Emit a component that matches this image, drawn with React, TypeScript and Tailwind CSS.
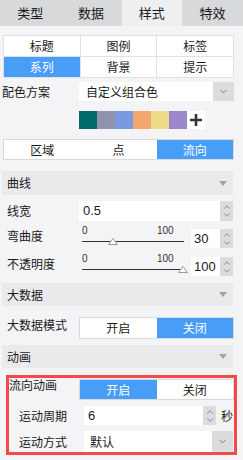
import { ChevronDown, ChevronUp } from 'lucide-react'

const BLUE = 'bg-[#489df7]'

function Tabs() {
	const tabs = ['类型', '数据', '样式', '特效']
	return (
		<div className="flex h-[26px] bg-[#d8d9db]">
			{tabs.map((t) => (
				<div
					key={t}
					className={`flex-1 flex items-center justify-center text-[13px] ${t === '样式' ? 'bg-[#efeff1]' : ''}`}
				>
					{t}
				</div>
			))}
		</div>
	)
}

function SubTabs() {
	const items = ['标题', '图例', '标签', '系列', '背景', '提示']
	return (
		<div className="mt-[9px] ml-[3px] w-[231px] grid grid-cols-3 gap-px bg-[#e1e1e3] border border-[#e1e1e3]">
			{items.map((t) => (
				<div
					key={t}
					className={`h-[20px] flex items-center justify-center text-[12px] ${t === '系列' ? `${BLUE} text-white` : 'bg-white'}`}
				>
					{t}
				</div>
			))}
		</div>
	)
}

function Segmented({ items, active, className }: { items: string[]; active: number; className?: string }) {
	return (
		<div className={`flex border border-[#d9d9db] bg-white ${className}`}>
			{items.map((t, i) => (
				<div
					key={t}
					className={`flex-1 flex items-center justify-center text-[12px] ${i === active ? `${BLUE} text-white` : ''}`}
				>
					{t}
				</div>
			))}
		</div>
	)
}

function DropBtn() {
	return (
		<div className="w-[21px] h-full bg-[#dcdcde] flex items-center justify-center">
			<ChevronDown size={11} strokeWidth={1.5} className="text-[#555]" />
		</div>
	)
}

function Spinner() {
	return (
		<div className="w-[13px] h-full bg-[#dcdcde] flex flex-col items-center justify-center">
			<ChevronUp size={10} strokeWidth={1.5} className="text-[#555] -mb-[1px]" />
			<ChevronDown size={10} strokeWidth={1.5} className="text-[#555] -mt-[1px]" />
		</div>
	)
}

function Header({ title, className }: { title: string; className?: string }) {
	return (
		<div className={`ml-[2px] w-[231px] bg-[#eaeaec] flex items-center justify-between pl-[5px] pr-[6px] text-[12px] ${className}`}>
			<span>{title}</span>
			<svg width="8" height="5" viewBox="0 0 8 5">
				<path d="M0 0 H8 L4 5 Z" fill="#a3a3a5" />
			</svg>
		</div>
	)
}

function Slider({ pos, value }: { pos: number; value: string }) {
	return (
		<div className="flex items-end h-[24px]">
			<div className="relative w-[102px] h-[24px] ml-[3px] font-['Liberation_Sans',sans-serif] text-[10px] leading-[10px] text-[#333]">
				<span className="absolute left-[0px] top-[1px]">0</span>
				<span className="absolute left-[75px] top-[1px]">100</span>
				<div className="absolute left-0 right-0 top-[16px] h-px bg-[#333]" />
				<svg width="10" height="7" viewBox="0 0 10 7" className="absolute top-[13px]" style={{ left: pos - 5 }}>
					<path d="M5 0.5 L9.5 6.5 H0.5 Z" fill="#fff" stroke="#9a9a9a" strokeWidth="1" />
				</svg>
			</div>
			<div className="ml-[7px] flex h-[19px] mb-[1px]">
				<div className="w-[29px] bg-white flex items-center pl-[3px] text-[13px] font-['Liberation_Sans',sans-serif]">
					{value}
				</div>
				<Spinner />
			</div>
		</div>
	)
}

export default function App() {
	const swatches = ['#006a68', '#9192ac', '#7a9ae0', '#f0a86c', '#eedd88', '#9b87cc']
	return (
		<div className="w-[243px] h-[460px] overflow-hidden bg-[#f4f4f6] text-[#1a1a1a] font-['Noto_Sans_CJK_SC',sans-serif]">
			<Tabs />
			<SubTabs />

			<div className="mt-[4px] flex items-center h-[19px] text-[12px]">
				<span className="w-[79px] pl-[2px]">配色方案</span>
				<div className="w-[155px] h-full flex bg-white">
					<div className="flex-1 flex items-center pl-[7px]">自定义组合色</div>
					<DropBtn />
				</div>
			</div>

			<div className="mt-[10px] ml-[79px] flex h-[18px]">
				{swatches.map((c) => (
					<div key={c} className="w-[18px] h-full" style={{ background: c }} />
				))}
				<div className="w-[18px] h-full bg-white flex items-center justify-center">
					<svg width="12" height="12" viewBox="0 0 12 12">
						<path d="M6 0 V12 M0 6 H12" stroke="#333" strokeWidth="2.6" />
					</svg>
				</div>
			</div>

			<Segmented items={['区域', '点', '流向']} active={2} className="mt-[10px] ml-[3px] w-[231px] h-[21px]" />

			<Header title="曲线" className="mt-[11px] h-[24px]" />

			<div className="mt-[6px] flex items-center h-[20px] text-[12px]">
				<span className="w-[79px] pl-[7px]">线宽</span>
				<div className="w-[141px] h-full bg-white flex items-center pl-[4px] text-[13px] font-['Liberation_Sans',sans-serif]">
					0.5
				</div>
				<Spinner />
			</div>

			<div className="mt-[4px] flex items-center text-[12px]">
				<span className="w-[79px] pl-[7px] -mt-[3px]">弯曲度</span>
				<Slider pos={31} value="30" />
			</div>

			<div className="mt-[4px] flex items-center text-[12px]">
				<span className="w-[79px] pl-[7px] -mt-[3px]">不透明度</span>
				<Slider pos={101} value="100" />
			</div>

			<Header title="大数据" className="mt-[6px] h-[23px]" />

			<div className="mt-[11px] flex items-center text-[12px]">
				<span className="w-[79px] pl-[7px] -mt-[6px]">大数据模式</span>
				<Segmented items={['开启', '关闭']} active={1} className="w-[155px] h-[22px]" />
			</div>

			<Header title="动画" className="mt-[6px] h-[23px]" />

			<div className="mt-[7px] ml-[6px] w-[231px] h-[80px] border-[3px] border-[#f24a4a] overflow-hidden text-[12px]">
				<div className="mt-[1px] flex">
					<span className="w-[70px] -mt-[2px] leading-[16px]">流向动画</span>
					<Segmented items={['开启', '关闭']} active={0} className="w-[155px] h-[21px]" />
				</div>
				<div className="mt-[6px] flex items-center h-[19px]">
					<span className="w-[75px] pl-[10px]">运动周期</span>
					<div className="w-[119px] h-full bg-white flex items-center pl-[4px] text-[13px] font-['Liberation_Sans',sans-serif]">
						6
					</div>
					<Spinner />
					<span className="ml-[5px]">秒</span>
				</div>
				<div className="mt-[6px] flex items-center h-[21px]">
					<span className="w-[75px] pl-[10px]">运动方式</span>
					<div className="w-[149px] h-full bg-white flex">
						<div className="flex-1 flex items-center pl-[6px]">默认</div>
						<DropBtn />
					</div>
				</div>
			</div>
		</div>
	)
}
